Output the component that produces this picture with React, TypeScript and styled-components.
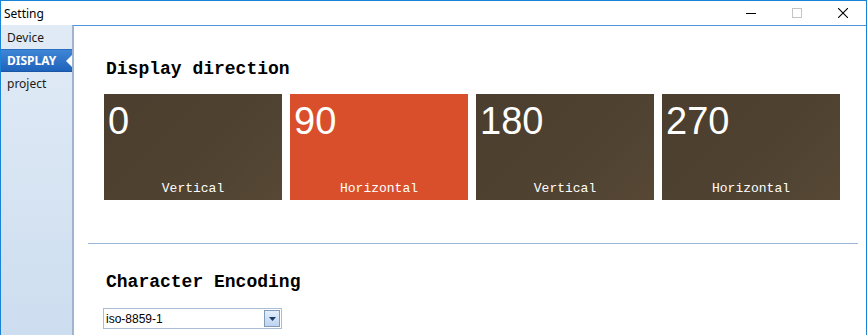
import React from "react";
import styled, { createGlobalStyle } from "styled-components";

const Global = createGlobalStyle`
  html, body { margin: 0; padding: 0; background: #fff; overflow: hidden; }
  * { box-sizing: border-box; }
`;

const Window = styled.div`
  width: 867px;
  height: 360px;
  border: 1px solid #1883d7;
  display: flex;
  flex-direction: column;
  background: #fff;
  font-family: "Noto Sans", "Open Sans", sans-serif;
`;

const TitleBar = styled.div`
  height: 24px;
  display: flex;
  align-items: center;
  justify-content: space-between;
  flex: none;
`;

const Title = styled.div`
  font-size: 12px;
  color: #000;
  padding-left: 3px;
  padding-top: 1px;
`;

const Controls = styled.div`
  display: flex;
  height: 100%;
`;

const CtrlBtn = styled.div`
  width: 46px;
  height: 100%;
  display: flex;
  align-items: center;
  justify-content: center;
`;

const Body = styled.div`
  flex: 1;
  display: flex;
  min-height: 0;
`;

const Sidebar = styled.div`
  width: 71px;
  flex: none;
  background: linear-gradient(#e1ebf6, #cbdcef);
  padding-top: 1px;
  display: flex;
  flex-direction: column;
`;

const NavItem = styled.div<{ $active?: boolean }>`
  position: relative;
  height: 23px;
  display: flex;
  align-items: center;
  padding-left: 6px;
  font-size: 12px;
  font-weight: ${(p) => (p.$active ? 700 : 400)};
  color: ${(p) => (p.$active ? "#fff" : "#1a1a1a")};
  background: ${(p) =>
    p.$active ? "linear-gradient(#3f86d6, #1f63bb)" : "transparent"};
  border-top: ${(p) => (p.$active ? "1px solid #2a6cc0" : "none")};
  border-bottom: ${(p) => (p.$active ? "1px solid #1a55a6" : "none")};
`;

const Arrow = styled.span`
  position: absolute;
  right: 0;
  top: 50%;
  margin-top: -6px;
  width: 0;
  height: 0;
  border-top: 6px solid transparent;
  border-bottom: 6px solid transparent;
  border-right: 6px solid #fff;
`;

const Content = styled.div`
  flex: 1;
  border-top: 1px solid #4f95dc;
  border-left: 2px solid #9fb4cf;
  padding-top: 31px;
  display: flex;
  flex-direction: column;
`;

const Section = styled.div`
  padding-left: 30px;
  display: flex;
  flex-direction: column;
`;

const Heading = styled.div`
  font-family: "Liberation Mono", monospace;
  font-size: 18px;
  font-weight: 700;
  line-height: 24px;
  color: #000;
  margin-left: 2px;
`;

const Tiles = styled.div`
  display: flex;
  gap: 8px;
  margin-top: 13px;
`;

const Tile = styled.div<{ $accent?: boolean }>`
  width: 178px;
  height: 106px;
  background: ${(p) =>
    p.$accent
      ? "#d94f2b"
      : "linear-gradient(135deg, #4b3e2e 0%, #4f4231 60%, #574835 100%)"};
  color: #fff;
  display: flex;
  flex-direction: column;
  justify-content: space-between;
  padding: 8px 0 3px 4px;
`;

const TileNum = styled.div`
  font-family: "Liberation Sans", Arial, sans-serif;
  font-size: 38px;
  line-height: 38px;
`;

const TileLabel = styled.div`
  font-family: "Liberation Mono", monospace;
  font-size: 13px;
  line-height: 16px;
  text-align: center;
  padding-right: 4px;
`;

const Divider = styled.div`
  height: 1px;
  background: #9ab6d8;
  margin: 43px 8px 0 14px;
`;

const Section2 = styled(Section)`
  margin-top: 26px;
`;

const Combo = styled.div`
  margin-top: 14px;
  margin-left: -1px;
  width: 179px;
  height: 21px;
  border: 1px solid #a9bdd6;
  display: flex;
  align-items: center;
  justify-content: space-between;
  padding: 0 1px 0 2px;
  background: #fff;
`;

const ComboText = styled.span`
  font-family: "Liberation Sans", Arial, sans-serif;
  font-size: 12px;
  color: #000;
`;

const ComboBtn = styled.div`
  width: 16px;
  height: 17px;
  border: 1px solid #7f9db9;
  background: linear-gradient(#e3eefb, #bcd3f0);
  display: flex;
  align-items: center;
  justify-content: center;
`;

const tiles = [
  { n: "0", l: "Vertical" },
  { n: "90", l: "Horizontal", a: true },
  { n: "180", l: "Vertical" },
  { n: "270", l: "Horizontal" },
];

export default function App() {
  return (
    <>
      <Global />
      <Window>
        <TitleBar>
          <Title>Setting</Title>
          <Controls>
            <CtrlBtn>
              <svg width="10" height="10" viewBox="0 0 10 10">
                <rect x="0" y="5" width="10" height="1" fill="#000" />
              </svg>
            </CtrlBtn>
            <CtrlBtn>
              <svg width="10" height="10" viewBox="0 0 10 10">
                <rect x="0.5" y="0.5" width="9" height="9" fill="none" stroke="#c4c4c4" />
              </svg>
            </CtrlBtn>
            <CtrlBtn>
              <svg width="10" height="10" viewBox="0 0 10 10">
                <path d="M0 0 L10 10 M10 0 L0 10" stroke="#000" strokeWidth="1.1" />
              </svg>
            </CtrlBtn>
          </Controls>
        </TitleBar>
        <Body>
          <Sidebar>
            <NavItem>Device</NavItem>
            <NavItem $active>
              DISPLAY
              <Arrow />
            </NavItem>
            <NavItem>project</NavItem>
          </Sidebar>
          <Content>
            <Section>
              <Heading>Display direction</Heading>
              <Tiles>
                {tiles.map((t) => (
                  <Tile key={t.n} $accent={t.a}>
                    <TileNum>{t.n}</TileNum>
                    <TileLabel>{t.l}</TileLabel>
                  </Tile>
                ))}
              </Tiles>
            </Section>
            <Divider />
            <Section2>
              <Heading>Character Encoding</Heading>
              <Combo>
                <ComboText>iso-8859-1</ComboText>
                <ComboBtn>
                  <svg width="7" height="4" viewBox="0 0 7 4">
                    <path d="M0 0 H7 L3.5 4 Z" fill="#1b3c6a" />
                  </svg>
                </ComboBtn>
              </Combo>
            </Section2>
          </Content>
        </Body>
      </Window>
    </>
  );
}
